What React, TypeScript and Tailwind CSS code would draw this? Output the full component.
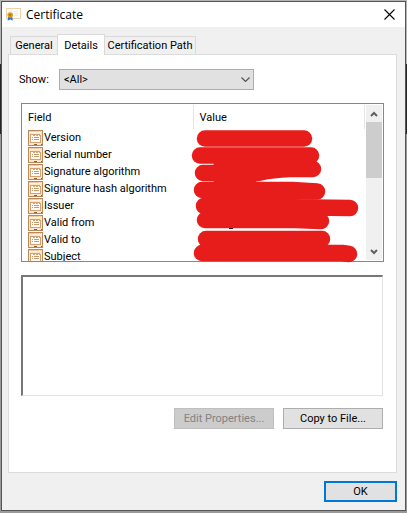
import { useState } from "react";

const fields = [
  "Version",
  "Serial number",
  "Signature algorithm",
  "Signature hash algorithm",
  "Issuer",
  "Valid from",
  "Valid to",
  "Subject",
];

const tabs = [
  { name: "General", width: "w-12" },
  { name: "Details", width: "w-12" },
  { name: "Certification Path", width: "w-[92px]" },
];

function CertificateIcon() {
  return (
    <svg viewBox="0 0 15 13" className="h-[13px] w-[15px]" aria-hidden="true">
      <rect x=".5" y=".5" width="14" height="10" fill="#fffdf8" stroke="#ecd2ae" />
      <path d="M3 3h4M8 3.500h4M8 5.500h4M8 7.500h4" stroke="#e9edf1" />
      <path d="m2.500 8-1 4.500 2-.5.700-1 .7 1 2 .5-1-4.500z" fill="#2f6fe0" />
      <circle cx="4.200" cy="7" r="2.800" fill="#dba01c" />
      <circle cx="4.200" cy="7" r="1.300" fill="#b5790a" />
    </svg>
  );
}

function FieldIcon() {
  return (
    <svg viewBox="0 0 15 16" className="h-4 w-[15px] shrink-0" aria-hidden="true" shapeRendering="crispEdges">
      <rect x=".5" y=".5" width="14" height="15" fill="#fde6cc" stroke="#b9895b" />
      <path d="M1 1.500h10M12 1.500h1" stroke="#f3c99c" />
      <path d="M1 2.500h13" stroke="#fff3e4" />
      <path d="M2.500 12.500v-8h3v1h1v-1h2v1h1v-1h2v1h1v7z" fill="#fffaf3" stroke="#d3a272" />
      <path d="M4 7.500h1M6 7.500h5M4 9.500h1M6 9.500h5" stroke="#c49a6c" />
      <path d="M6 14.500h3M13 14.500h1" stroke="#8d5c30" />
    </svg>
  );
}

function Redaction() {
  return (
    <svg
      viewBox="21 103 363 159"
      className="pointer-events-none absolute -left-px -top-px h-[159px] w-[363px] overflow-visible"
      aria-hidden="true"
    >
      <path d="M229 228.500h4" stroke="#200a2a" />
      <g
        fill="none"
        stroke="#e71d1c"
        strokeWidth="16.500"
        strokeLinecap="round"
        strokeLinejoin="round"
      >
        <path d="M205 138.500h99" />
        <path d="M200 155.500h111" />
        <path d="M203 173h55q14-3.500 32-4h23" />
        <path d="M202 190h90l25 1.500" />
        <path d="M204 206l146 2" />
        <path d="M205 220h90l26 1" />
        <path d="M206 239h116" />
        <path d="M202 253h140l7 1" />
        <path d="M215 164h90M215 181h40M215 198h98M215 213h98M215 246h98" strokeWidth="3" />
      </g>
    </svg>
  );
}

function ScrollBar() {
  return (
    <div className="mt-px mr-px mb-px flex w-4 shrink-0 flex-col bg-[#f0f0f0]">
      <button type="button" aria-label="Scroll up" className="flex h-[17px] items-center justify-center">
        <svg viewBox="0 0 8 6" className="h-1.5 w-2">
          <path d="M1 5l3-3 3 3" fill="none" stroke="#606060" strokeWidth="2" />
        </svg>
      </button>
      <div className="h-14 bg-[#cdcdcd]" />
      <button type="button" aria-label="Scroll down" className="mt-auto flex h-[17px] items-center justify-center">
        <svg viewBox="0 0 8 6" className="h-1.5 w-2">
          <path d="M1 1l3 3 3-3" fill="none" stroke="#606060" strokeWidth="2" />
        </svg>
      </button>
    </div>
  );
}

export default function App() {
  const [active, setActive] = useState("Details");

  return (
    <div className="flex min-h-screen flex-col bg-[linear-gradient(#b5b5b5_64px,#252525_64px_134px,#9a9a9a_134px)] px-px pt-px pb-0.5 font-[Roboto,'Noto_Sans',sans-serif] text-[11px]/[17px] text-black">
      <main className="flex grow flex-col border border-[#555555] bg-[#f0f0f0]">
        <header className="flex h-[25px] items-center bg-white pl-1 font-['Open_Sans',sans-serif] text-xs">
          <CertificateIcon />
          <h1 className="ml-[5px]">Certificate</h1>
          <button type="button" aria-label="Close" className="mr-2.5 ml-auto">
            <svg viewBox="0 0 11 11" className="size-[11px]">
              <path d="M.5.5l10 10M10.500.5l-10 10" stroke="#000" strokeWidth="1.100" />
            </svg>
          </button>
        </header>

        <div className="flex grow flex-col pt-[7px] pr-2 pb-2 pl-1.5">
          <div role="tablist" className="z-10 -mb-px flex items-end pl-0.5">
            {tabs.map((tab) => (
              <button
                key={tab.name}
                type="button"
                role="tab"
                aria-selected={active === tab.name}
                onClick={() => setActive(tab.name)}
                className={
                  active === tab.name
                    ? `${tab.width} -mr-px h-[21px] border border-b-0 border-[#d9d9d9] bg-white whitespace-nowrap`
                    : `${tab.width} -mr-px mb-px h-[18px] border border-b-0 border-[#d9d9d9] whitespace-nowrap`
                }
              >
                {tab.name}
              </button>
            ))}
          </div>

          <section className="flex grow flex-col border border-[#dcdcdc] bg-white px-3 pt-3.5">
            <div className="flex items-center">
              <label htmlFor="show" className="-ml-0.5 w-10 shrink-0">
                Show:
              </label>
              <div className="relative">
                <select
                  id="show"
                  className="block h-[21px] w-[195px] appearance-none border border-[#adadad] bg-[#e1e1e1] pl-1"
                >
                  <option>&lt;All&gt;</option>
                </select>
                <svg viewBox="0 0 9 5" className="pointer-events-none absolute top-2 right-1 h-[5px] w-[9px]">
                  <path d="M.5.5l4 4 4-4" fill="none" stroke="#555" strokeWidth="1.200" />
                </svg>
              </div>
            </div>

            <div className="relative mt-[13px] flex h-[159px] border border-[#828790]">
              <div className="grow overflow-hidden pt-px pr-px">
                <table className="w-full table-fixed border-collapse text-left">
                  <thead>
                    <tr className="h-6">
                      <th className="w-[171px] border-r border-[#e5e5e5] pl-1.5 font-normal">Field</th>
                      <th className="border-r border-[#e5e5e5] pl-1.5 font-normal">Value</th>
                    </tr>
                  </thead>
                  <tbody>
                    {fields.map((field) => (
                      <tr key={field} className="h-[17px]">
                        <td className="p-0 pl-1.5">
                          <div className="flex h-[17px] items-center gap-px whitespace-nowrap">
                            <FieldIcon />
                            {field}
                          </div>
                        </td>
                        <td />
                      </tr>
                    ))}
                  </tbody>
                </table>
              </div>
              <ScrollBar />
              <Redaction />
            </div>

            <div className="mt-[13px] pr-px">
              <textarea
                readOnly
                aria-label="Field value"
                className="block h-[121px] w-full resize-none border-t-2 border-r border-b border-l-2 border-t-[#777777] border-r-[#e3e3e3] border-b-[#e3e3e3] border-l-[#777777]"
              />

              <div className="mt-3 flex justify-end gap-[9px]">
                <button
                  type="button"
                  disabled
                  className="h-[21px] w-[100px] border border-[#bfbfbf] bg-[#cccccc] text-[#838383]"
                >
                  Edit Properties...
                </button>
                <button type="button" className="h-[21px] w-[100px] border border-[#adadad] bg-[#e1e1e1]">
                  Copy to File...
                </button>
              </div>
            </div>
          </section>

          <footer className="mt-2 flex justify-end">
            <button type="button" className="h-[21px] w-[73px] border-2 border-[#0078d7] bg-[#e1e1e1]">
              OK
            </button>
          </footer>
        </div>
      </main>
    </div>
  );
}
